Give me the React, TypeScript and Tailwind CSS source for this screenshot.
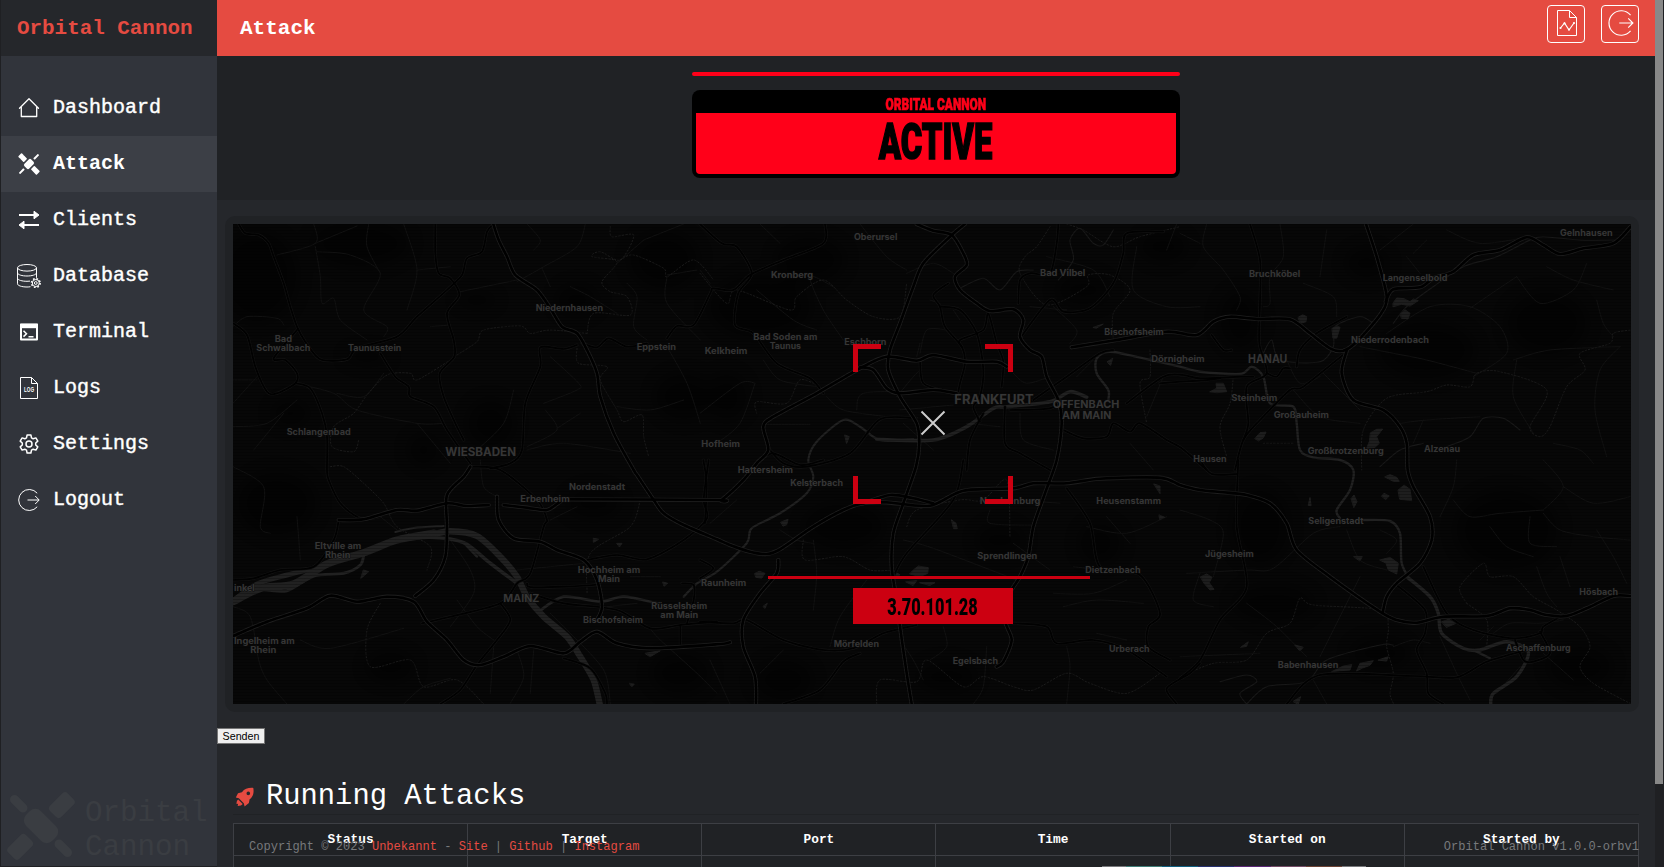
import type { ReactNode } from "react";

const MONO = "font-['Liberation_Mono','Courier_New',monospace]";
const COND = "font-['Roboto','Liberation_Sans',sans-serif]";

/* ---------- map geometry ---------- */

// Each sheet of the map has its own origin; coordinates inside are thirds of a pixel.
const SHEETS: Record<string, [number, number]> = {
  A: [-16, -14],
  B: [-16, 236],
  C: [467, -14],
  D: [467, 236],
  E: [947, -14],
  F: [947, 236],
};

function points(src: string): [number, number][] {
  let origin = SHEETS.A;
  const out: [number, number][] = [];
  for (const tok of src.trim().split(/\s+/)) {
    if (SHEETS[tok]) {
      origin = SHEETS[tok];
      continue;
    }
    const [x, y] = tok.split(",").map(Number);
    out.push([origin[0] + x / 3, origin[1] + y / 3]);
  }
  return out;
}

function curve(src: string): string {
  const p = points(src);
  let d = `M${p[0][0].toFixed(1)} ${p[0][1].toFixed(1)}`;
  for (let i = 0; i < p.length - 1; i++) {
    const a = p[Math.max(i - 1, 0)];
    const b = p[i];
    const c = p[i + 1];
    const e = p[Math.min(i + 2, p.length - 1)];
    const k = 7;
    d += `C${(b[0] + (c[0] - a[0]) / k).toFixed(1)} ${(b[1] + (c[1] - a[1]) / k).toFixed(1)} ${(c[0] - (e[0] - b[0]) / k).toFixed(1)} ${(c[1] - (e[1] - b[1]) / k).toFixed(1)} ${c[0].toFixed(1)} ${c[1].toFixed(1)}`;
  }
  return d;
}

function polygon(src: string): string {
  return points(src).map((q) => q.map((n) => n.toFixed(1)).join(",")).join(" ");
}

const MOTORWAYS = [
  "A 829,42 845,90 870,140 895,195 960,240 1000,295 1035,350 1080,370 1110,420 1140,490 1150,560 1190,670 1250,780 B 1260,45 1310,120 1340,160 1400,195 1500,238 D 90,255 150,275 200,282 240,268 340,200 430,150 490,130 560,127 690,137 790,92 940,85 1000,70 1100,70 1200,56 1380,53 1440,75 F 60,90 130,97 200,105 270,130 320,190 350,270 450,350 600,455 650,480 710,488 790,470 920,468 990,445 1050,450 1100,465 1160,468 1220,445 1300,408 1352,408",
  "C 795,42 750,80 670,160 640,230 600,340 570,420 565,480 600,560 650,640 658,700 648,770 D 610,130 580,220 575,320 590,420 600,500 620,640 635,732",
  "C 650,42 700,62 755,75 790,130 800,165 765,200 780,240 830,280 870,303 940,298 970,330 960,380 990,420 1025,440 1040,500 1075,570 1085,640 1070,750 D 1035,100 1000,200 985,290 960,350 930,400 915,480 935,540 910,605 890,620",
  "B 860,135 930,143 990,150 1030,125 1060,118 1500,120 D 65,120 130,60 170,10 C 205,720 190,650 220,620 350,550 480,475 560,440 650,452 700,435 800,455 890,455 920,470",
  "C 480,472 520,480 560,535 600,550 700,540 770,550",
  "C 1115,412 1250,390 1400,365 E 50,375 100,335 150,320 230,327 330,328 390,370 450,415 490,422 530,395 600,315 620,260 590,140 558,42",
  "E 617,275 640,238 720,232 760,205 820,185 880,135 960,120 1040,82 1090,105 1140,132 1210,115 1300,100 1352,50",
  "E 500,422 485,490 520,570 610,600 660,650 680,700 683,780 F 700,80 750,170 755,240 720,310 650,370 620,410 608,458",
  "B 48,528 150,485 270,445 340,407 420,425 510,410 590,425 630,485 690,540 740,600 790,615 860,590 940,558 1040,580 1090,545 1140,515 1200,550 1300,565 1500,553 D 90,547",
  "B 595,408 650,360 685,290 690,200 690,105 740,50 760,20",
  "B 365,180 440,178 540,150 600,152 690,130 750,138 815,135",
  "B 840,110 845,180 890,235 970,245 1020,270 1100,300 1140,360 1155,440 1140,480",
  "D 235,300 230,340 180,400 130,480 130,560 165,650 168,732",
  "D 490,130 570,105 640,115 700,130",
];

const ROADS = [
  "A 65,42 85,70 125,75 155,100 170,140 200,220 220,290 240,350 265,395 310,448 390,448 420,415 540,380 600,320 690,240 735,195 750,145 795,125 810,65 829,42",
  "A 655,42 655,130 665,190 700,205 727,255 690,310 710,390 712,440 668,490 680,560 715,640 740,690",
  "A 48,340 90,375 115,470 150,545 180,550 235,520 240,490 205,450 170,445 240,360",
  "A 235,520 280,535 315,610 330,680 330,780 B 335,60 370,130 430,175 490,170",
  "A 490,430 535,500 575,530 580,560 650,590 690,660 760,760",
  "A 1080,405 1040,417 970,412 970,470 925,580 915,720 880,760 820,775",
  "A 1095,400 1140,412 1175,385 1230,410 1290,400",
  "A 1350,385 1380,348 1430,345 1480,250 C 40,235 100,240 150,195 250,150 370,100 375,42",
  "C 0,42 65,100 110,110 155,190 115,250 105,345 160,370 230,460 330,505 370,550",
  "C 745,220 700,255 720,290 735,350 785,410 795,460 780,520 770,570",
  "C 720,290 780,300 830,370 850,480 840,560 820,590 840,635",
  "C 785,410 780,390 850,360 865,310 890,400 910,455 905,530",
  "C 955,280 960,210 990,190 1050,190 1070,100 1075,42",
  "C 960,385 1050,270 1090,305 1170,295 1240,220 1270,130 1280,70 1390,65",
  "C 1000,570 1100,500 1200,430 1240,420",
  "C 915,590 915,700 960,730 1060,785",
  "C 930,600 1050,595 1080,570",
  "C 1090,660 1150,685 1220,680 1240,640 1290,665 1320,640 1400,690 1445,715 E 80,780",
  "C 210,720 250,760 320,770 450,730 540,628 650,625",
  "C 1280,580 1390,500 1450,495 E 60,505 180,500 220,500",
  "C 1380,520 1440,515 E 60,512 120,505",
  "D 170,10 220,-20 300,15 370,0",
  "D 790,0 760,120 620,280 580,350",
  "D 0,485 100,490 140,480 250,540 370,570 460,565 550,520 650,495",
  "D 250,732 360,690 430,605 480,580",
  "D 940,490 1040,500 1070,550 1180,540 1280,570 1400,650",
  "D 1100,85 1170,190 1200,320 1320,345 1380,460 1345,500 1345,560 1410,600",
  "D 1500,610 1470,640 1400,685 1430,732",
  "F 175,0 170,200 200,380 120,480 60,600 0,655",
  "F 60,0 95,42 170,42",
  "F 320,732 420,645 700,648 830,652 920,605 1040,570",
  "F 650,375 735,450 735,520 710,570 740,640 745,700 790,732",
  "F 730,320 800,460 880,510 1000,535 1080,520 1090,500 1150,465",
  "F 1005,540 1030,600 1060,605 1110,580 1080,515",
  "E 350,470 360,420 410,370 500,320",
  "E 495,430 370,530 330,540 240,630 190,690 165,780",
  "E 210,42 240,150 240,280 238,400 260,490 200,530 205,640 190,690",
  "E 95,375 130,420 155,420",
  "E 260,490 290,500 310,475 330,475",
  "B 48,360 110,355 190,330 290,320 350,240 365,180",
  "B 615,490 700,470 850,430 900,370 940,340 980,200 990,180 960,120 850,30 760,20",
  "B 850,430 880,480 840,540 780,615 730,690 670,732",
  "B 1110,300 1200,285 1290,298 1400,240 1470,175 1460,120 1475,0",
  "B 930,370 950,382 1130,375 1150,360",
  "B 940,400 1040,430 1200,450 1300,505 1390,495 1500,485",
  "B 1040,595 1120,625 1165,700 1170,732",
  "B 1390,495 1390,560",
  "B 1395,370 1430,375 1430,420 1410,490",
  "C 800,780 810,690 850,610",
  "C 660,450 670,520 740,545",
  "D 0,300 40,325 0,355",
  "D 10,0 20,70 15,190",
];

const MINOR = [
  "A 290,42 295,100 180,135", "A 295,100 420,48", "A 300,125 400,135 490,190 440,300 510,350 500,380",
  "A 295,110 310,200 315,280 350,265 370,330 450,390", "A 455,42 450,110 490,190", "A 560,42 600,180 570,300",
  "A 600,180 700,170", "A 730,245 900,210", "A 48,350 90,320 180,325 200,345", "A 48,510 120,510",
  "A 48,580 120,500", "A 235,520 350,550 420,600 600,640 680,640", "A 240,570 150,640 48,650", "A 110,720 200,610",
  "A 930,42 970,90 950,120", "A 1105,42 1080,110 980,170 900,215", "A 975,175 1000,230", "A 1280,90 1400,42",
  "A 1280,90 1200,160", "A 1350,195 1440,180", "A 1230,220 1260,260 1250,350 1290,390", "A 1350,200 1350,280 1450,390",
  "A 1060,230 1120,260 1200,310", "A 980,580 1080,540 1085,520 1000,440", "A 985,600 1020,660 930,710", "A 1020,655 1090,610",
  "A 1350,410 1410,520 1450,640", "A 1200,590 1300,600 1400,570", "A 930,720 1040,700 1240,730", "A 640,350 700,345",
  "A 500,490 440,560 360,550", "A 600,640 700,760", "A 890,540 860,640 780,720",
  "B 48,20 140,80 130,200 160,220", "B 240,170 250,300", "B 210,732 150,660 125,600 100,470 48,440",
  "B 250,540 340,565 560,505", "B 490,170 540,210", "B 700,240 760,330 770,400 700,500", "B 720,420 780,500 830,540",
  "B 830,560 820,700", "B 900,570 920,650 880,730", "B 950,570 940,700", "B 1000,460 1060,520 1160,630 1180,732",
  "B 1220,470 1290,500 1330,540 1440,640 1500,700", "B 1170,440 1260,430", "B 900,330 1000,320 1100,310", "B 1000,180 1080,140",
  "B 560,732 620,680 700,655", "B 790,0 800,80 840,110", "B 1240,350 1330,350",
  "C 180,42 240,100", "C 480,42 560,140 620,180", "C 0,180 30,220", "C 620,190 700,160 760,190", "C 400,230 330,200 370,300 430,390",
  "C 170,240 280,330 350,360", "C 190,450 240,510 350,530", "C 0,610 120,520 165,520", "C 165,520 120,640 50,700",
  "C 200,643 330,643", "C 660,430 680,360 740,360", "C 690,270 720,280", "C 660,400 650,440", "C 380,560 430,600 560,620",
  "C 590,560 640,500 660,480", "C 600,600 760,585", "C 610,640 700,720", "C 470,600 490,550 640,545", "C 760,300 780,330",
  "C 990,290 1100,300", "C 1040,140 1180,180 1230,260", "C 1310,110 1300,240 1400,290 1500,290", "C 1400,120 1430,42",
  "C 1110,400 1130,360 1060,290", "C 1180,450 1130,500", "C 940,490 980,520 1050,500", "C 960,610 970,690 1060,720",
  "C 800,640 900,650", "C 1120,600 1200,600", "C 1290,700 1360,780", "C 1390,500 1340,620",
  "D 870,150 870,190 1000,195", "D 940,250 1050,330", "D 610,240 700,265 950,360", "D 500,360 420,470 390,560",
  "D 240,210 290,240 340,250", "D 340,240 350,340 340,450", "D 860,560 850,680 820,732", "D 670,660 640,600 600,540",
  "D 1100,560 1110,620 1100,732", "D 1190,520 1280,540", "D 1060,400 1180,400 1280,360", "D 1200,330 1120,320",
  "D 1090,440 1190,420 1330,430", "D 30,600 90,732", "D 250,570 180,640", "D 1220,170 1290,250", "D 30,190 110,120",
  "D 1160,200 1280,220 1400,170", "D 730,500 740,560 690,600", "D 960,120 1080,130",
  "E 80,42 70,110 130,180 180,260 170,300", "E 0,70 60,100", "E 300,42 310,140 270,200 270,280 250,290", "E 370,220 460,260 470,320",
  "E 440,60 420,200", "E 600,120 700,42", "E 680,140 720,190", "E 740,90 700,130", "E 800,60 900,100 1040,82",
  "E 620,370 750,290 870,290 960,350 980,430 880,500", "E 540,410 640,430 740,450 890,490", "E 1010,200 1080,280 1180,240 1220,160",
  "E 1100,170 1180,210 1300,240", "E 870,295 950,240 1010,200", "E 1000,450 1110,420 1320,410", "E 1250,270 1270,340 1300,380",
  "E 660,640 740,630 900,620", "E 730,630 700,700", "E 1010,450 1000,560 1060,670", "E 1320,410 1260,480 1245,600 1280,740",
  "E 340,540 420,620 540,640", "E 430,490 540,600", "E 1120,700 1200,720 1240,760", "E 320,450 360,520 420,500",
  "F 0,150 90,180 130,220 100,350", "F 20,340 200,330 280,325 400,220 480,200", "F 200,430 290,500 380,590", "F 540,350 420,590",
  "F 500,210 540,300 620,330", "F 600,210 650,240 620,280", "F 830,0 820,80 780,170", "F 820,120 870,170 960,160 1090,150",
  "F 1090,150 1150,80 1090,0", "F 1150,80 1240,130 1350,110", "F 1090,160 1140,210 1240,230 1350,240", "F 1050,170 1050,250 1130,260",
  "F 930,200 980,260 1060,290", "F 1250,210 1300,290 1340,370", "F 1140,290 1170,380", "F 1070,320 1100,400 1130,440",
  "F 780,530 830,640 870,720", "F 940,520 990,490 1080,490 1150,480", "F 900,540 940,500", "F 1090,580 1180,660",
  "F 1020,620 950,700", "F 640,560 700,540 750,550", "F 100,440 40,420 60,340", "F 240,580 0,590", "F 400,660 440,732",
];

const BORDERS = [
  "A 1180,50 1185,80 1250,75 1210,150 1150,125 1125,140 1200,155 1155,215 1180,245 1230,260 1240,315 1130,310 1110,370",
  "A 1210,150 1250,135 1340,175 1350,200 1430,150 1490,210",
  "A 1110,370 1000,360 940,370 910,348 800,360 780,395 720,435",
  "A 700,450 600,510 580,490 510,495 450,555 410,610 350,650 345,710 410,725 425,690",
  "A 1080,415 1085,460 1170,470 1150,510 1200,600 1220,635 1275,615 1280,680 1295,740",
  "B 340,20 380,20 440,70 500,130 540,200 640,260 630,330",
  "B 490,430 450,510 460,620 580,600 620,680 720,660 800,732",
  "B 1270,120 1240,200 1120,280 1110,400",
  "C 0,190 80,280 110,240 270,300 290,260 370,210 440,270 520,320 600,320 620,220",
  "C 360,530 300,510 260,580 170,575 170,610",
  "C 1050,50 1010,110 975,140 960,190 1040,285 1160,230 1165,195 1230,195 1290,240 1240,310 1240,390",
  "C 1100,42 1150,60 1240,110 1320,80 1440,50",
  "C 1350,420 1350,500 1320,520 1340,640",
  "D 310,240 315,300 430,290 510,330 580,330",
  "D 530,732 540,660 650,665 680,600 790,680 850,650 940,680 1000,690 1100,640 1170,670 1280,700 1380,640",
  "D 620,200 650,150 780,120 850,120 920,60 930,230",
  "E 1350,360 1300,370 1290,400 1200,430 1215,480 1160,530 1110,650 1080,680 1050,650 1100,540 960,485 890,490 870,530 800,525 740,545 620,565 550,660 545,780",
  "E 160,500 150,580 120,650 140,740",
  "E 250,700 340,700",
  "F 0,650 100,610 200,600 260,520 330,490 360,415 400,435 600,450 625,500 620,560 640,640 630,700 640,730",
  "F 860,430 840,380 910,310 930,350 1000,350 1060,410 1130,450 1200,500 1230,560 1200,620 1240,670 1350,730",
  "F 860,430 920,480 920,560",
];

const STREAMS = [
  "C 1075,210 1120,150 1110,90 1140,55 1180,100 1210,105 1240,60",
  "C 780,235 850,205 900,240 950,185 1000,180",
  "E 250,430 275,390 300,450 420,455 460,410 465,350 540,320 580,340",
  "E 640,340 680,290 760,230 850,170 950,140 1050,90 1090,80 1200,90 1310,90",
  "F 200,732 260,680 380,665 440,600 600,555 640,555",
  "F 120,665 200,645 230,665 180,700 200,732",
  "E 800,710 870,680 910,625 970,625 1020,660",
  "E 600,770 660,720 730,700",
];

const RIVERS: { d: string; w: number }[] = [
  { d: "B 48,425 130,385 230,372 330,312 440,278 540,240 650,220", w: 7.5 },
  { d: "B 48,422 120,372 210,345 330,315", w: 5 },
  { d: "B 640,225 700,214 780,228 850,290 900,350 930,410 980,470 1050,530 1090,590 1130,660 1148,732", w: 6.4 },
  { d: "B 130,388 210,392 290,348 380,340 430,315 440,285", w: 3 },
  { d: "B 540,240 640,232 740,248 820,310 900,370", w: 3.6 },
  { d: "B 740,248 780,290", w: 2.4 },
  { d: "B 535,216 590,204 680,198", w: 2 },
  { d: "B 965,455 1040,410 1150,425 1220,410 1320,430", w: 2.8 },
  { d: "B 1400,410 1440,370 1500,335 D 140,250 155,205 240,160 320,100 340,50 325,0 C 350,695 430,630 480,650 540,690 640,688", w: 2.2 },
  { d: "C 530,688 700,690 800,650 880,595 920,590 1050,575 1110,545 1160,562", w: 3.6 },
  { d: "C 1225,570 1225,540 1190,490 1190,445 1230,425 1330,445 1440,470 E 60,485 180,492 215,470 250,500 270,580 340,590 350,640 360,720 400,742 480,750 520,780 F 510,90 470,150 480,175", w: 2.4 },
  { d: "F 550,180 630,183 660,220 665,310 690,360", w: 2.4 },
  { d: "F 680,350 750,410 775,460 785,520 850,565 900,570 980,545 1045,575 1010,650 940,700 932,732", w: 3.4 },
  { d: "F 880,570 930,595", w: 2.4 },
];

const LAKES = [
  "E 640,278 650,264 672,266 690,275 700,267 715,272 690,288 665,283 640,290", "E 662,312 676,300 690,310 684,326 665,325", "E 355,322 368,314 380,320 378,335 362,340", "E 457,355 472,348 480,352 470,385 460,385",
  "E 225,685 240,668 258,666 250,684 236,692", "E 572,668 590,658 608,657 590,680 598,700 585,712 560,715 568,695", "E 90,545 110,535 108,520 130,520 140,545 112,548", "F 62,350 80,342 96,352 88,368 102,388 90,390 72,370",
  "F 655,90 672,75 690,88 695,122 660,118", "F 615,50 630,44 650,52 658,64 640,64 628,58", "F 605,108 612,100 628,108 618,118", "F 514,115 522,105 531,125 522,142", "F 600,300 630,292 655,310 650,342 625,330 618,310",
  "F 522,290 547,290 540,302", "F 785,485 806,478 828,490 800,502", "F 455,635 490,618 515,614 510,630 480,632", "F 530,632 540,610 580,602 570,616 548,624",
  "F 595,600 625,590 620,602", "F 345,555 370,562 360,572", "F 182,562 205,545 200,558", "F 385,135 390,112 393,136", "F 340,724 362,710 355,732",
  "D 640,330 655,318 685,323 683,340 660,350 630,342", "D 618,365 650,362 640,376", "D 660,368 705,368 690,376", "D 165,340 178,334 195,340 185,355 168,352",
  "D 243,186 264,178 260,194 250,198", "D 755,180 768,190 772,206 762,206", "D 190,438 202,430 195,445", "C 1222,455 1238,445 1232,466", "C 435,675 448,680 440,700",
  "C 1180,352 1210,342 1190,354", "B 1130,235 1145,238 1130,247", "B 1200,250 1215,250 1208,260", "B 1338,366 1352,370 1342,378", "B 1238,670 1252,672 1245,680",
  "B 1285,580 1330,572 1300,590", "B 440,330 455,335 432,355", "D 578,330 600,345 580,350", "D 1362,72 1380,78 1380,100", "D 1378,165 1394,172 1380,178",
];

type Label = [string, number, number, number, string, number?];
const LABELS: Label[] = [
  ["A", 199, 396, 52, "Bad"], ["A", 199, 423, 162, "Schwalbach"], ["A", 473, 422, 160, "Taunusstein"],
  ["A", 1057, 302, 202, "Niedernhausen"], ["A", 1318, 419, 118, "Eppstein"], ["A", 305, 674, 192, "Schlangenbad"],
  ["A", 791, 738, 212, "WIESBADEN", 34],
  ["B", 1140, 89, 168, "Nordenstadt"], ["B", 984, 127, 148, "Erbenheim"], ["B", 363, 267, 140, "Eltville am"], ["B", 362, 295, 76, "Rhein"],
  ["B", 1176, 338, 188, "Hochheim am"], ["B", 1176, 366, 66, "Main"], ["B", 913, 425, 108, "MAINZ", 32], ["B", 1188, 488, 180, "Bischofsheim"],
  ["B", 1387, 446, 168, "Rüsselsheim"], ["B", 1387, 474, 114, "am Main"], ["B", 142, 553, 182, "Ingelheim am"], ["B", 139, 580, 78, "Rhein"],
  ["B", 82, 393, 62, "inkel"],
  ["C", 527, 89, 130, "Oberursel"], ["C", 276, 204, 126, "Kronberg"], ["C", 256, 390, 192, "Bad Soden am"], ["C", 256, 417, 94, "Taunus"],
  ["C", 78, 432, 128, "Kelkheim"], ["C", 496, 405, 126, "Eschborn"], ["C", 1088, 199, 136, "Bad Vilbel"], ["C", 1302, 374, 178, "Bischofsheim"],
  ["C", 1434, 456, 160, "Dörnigheim"], ["C", 882, 583, 238, "FRANKFURT", 38], ["C", 1158, 594, 200, "OFFENBACH", 32], ["C", 1160, 627, 148, "AM MAIN", 32],
  ["C", 62, 710, 116, "Hofheim"],
  ["D", 196, 38, 166, "Hattersheim"], ["D", 350, 77, 158, "Kelsterbach"], ["D", 930, 132, 182, "Neu Isenburg"], ["D", 1286, 133, 194, "Heusenstamm"],
  ["D", 922, 297, 180, "Sprendlingen"], ["D", 1239, 338, 166, "Dietzenbach"], ["D", 71, 379, 136, "Raunheim"], ["D", 469, 562, 136, "Mörfelden"],
  ["D", 826, 612, 136, "Egelsbach"], ["D", 1288, 576, 122, "Urberach"],
  ["E", 1219, 77, 158, "Gelnhausen"], ["E", 284, 201, 154, "Bruchköbel"], ["E", 705, 212, 194, "Langenselbold"], ["E", 630, 400, 234, "Niederrodenbach"],
  ["E", 263, 460, 118, "HANAU", 34], ["E", 223, 574, 138, "Steinheim"], ["E", 364, 624, 166, "Großauheim"], ["E", 497, 732, 228, "Großkrotzenburg"],
  ["E", 786, 727, 108, "Alzenau"], ["E", 90, 757, 100, "Hausen"],
  ["F", 468, 192, 166, "Seligenstadt"], ["F", 148, 292, 146, "Jügesheim"], ["F", 1256, 405, 116, "Hösbach"], ["F", 1075, 574, 194, "Aschaffenburg"],
  ["F", 384, 624, 182, "Babenhausen"],
];

const WOODS: [string, number, number, number, number][] = [
  ["A", 120, 200, 150, 170], ["A", 430, 100, 180, 90], ["A", 780, 270, 70, 30], ["A", 220, 610, 70, 50], ["A", 450, 440, 80, 30],
  ["A", 820, 640, 90, 90], ["A", 1340, 150, 130, 110], ["A", 1400, 560, 110, 90], ["A", 620, 720, 60, 60], ["A", 1080, 270, 80, 60],
  ["B", 180, 130, 150, 120], ["B", 1130, 130, 100, 60], ["B", 1390, 640, 110, 80], ["B", 520, 620, 90, 60],
  ["C", 180, 290, 190, 120], ["C", 330, 150, 130, 90], ["C", 1150, 240, 100, 60], ["C", 1390, 110, 90, 60], ["C", 80, 560, 80, 90],
  ["D", 430, 200, 150, 90], ["D", 900, 240, 90, 60], ["D", 740, 650, 110, 60], ["D", 250, 660, 110, 80], ["D", 1200, 250, 80, 80],
  ["E", 740, 420, 180, 110], ["E", 1100, 340, 150, 120], ["E", 180, 330, 80, 110], ["E", 560, 160, 80, 60],
  ["F", 980, 210, 190, 150], ["F", 240, 200, 110, 140], ["F", 280, 430, 150, 70], ["F", 600, 580, 110, 60], ["F", 1200, 620, 120, 80],
];

function AreaMap() {
  return (
    <svg className="block h-[480px] w-[1398px] bg-[#070707]" viewBox="0 0 1398 480" fill="none" strokeLinecap="round" strokeLinejoin="round">
      <defs>
        <pattern id="scan" width="8" height="3" patternUnits="userSpaceOnUse">
          <rect width="8" height="1" fill="#000" opacity="0.25" />
        </pattern>
        <filter id="soft" x="-30%" y="-30%" width="160%" height="160%">
          <feGaussianBlur stdDeviation="7" />
        </filter>
      </defs>
      <g fill="#030303" opacity="0.45" filter="url(#soft)">
        {WOODS.map(([s, x, y, rx, ry], i) => (
          <ellipse key={i} cx={SHEETS[s][0] + x / 3} cy={SHEETS[s][1] + y / 3} rx={rx / 3.6} ry={ry / 3.6} />
        ))}
      </g>
      <g stroke="#121212" strokeWidth="1">
        {MINOR.map((r) => <path key={r} d={curve(r)} />)}
      </g>
      <g stroke="#1e1e1e" strokeWidth="0.9" strokeDasharray="1.5 2">
        {BORDERS.map((r) => <path key={r} d={curve(r)} />)}
      </g>
      <g stroke="#191919" strokeWidth="1.1">
        {STREAMS.map((r) => <path key={r} d={curve(r)} />)}
      </g>
      <g stroke="#212121">
        {RIVERS.map((r) => <path key={r.d} d={curve(r.d)} strokeWidth={r.w} />)}
      </g>
      <g fill="#1e1e1e" stroke="#1e1e1e" strokeWidth="1">
        {LAKES.map((r) => <polygon key={r} points={polygon(r)} />)}
      </g>
      <g stroke="#131313" strokeWidth="3">
        {ROADS.map((r) => <path key={r} d={curve(r)} />)}
      </g>
      <g stroke="#010101" strokeWidth="1.7">
        {ROADS.map((r) => <path key={r} d={curve(r)} />)}
      </g>
      <g stroke="#1f1f1f" strokeWidth="4.2">
        {MOTORWAYS.map((r) => <path key={r} d={curve(r)} />)}
      </g>
      <g stroke="#000" strokeWidth="2.6">
        {MOTORWAYS.map((r) => <path key={r} d={curve(r)} />)}
      </g>
      <rect width="1398" height="480" fill="url(#scan)" />
      <g className="font-['Inter','Open_Sans',sans-serif] font-bold" fill="#363636" stroke="#0a0a0a" strokeWidth="0.8" paintOrder="stroke" textAnchor="middle">
        {LABELS.map(([s, x, y, w, text, size]) => (
          <text
            key={text + s + y}
            x={SHEETS[s][0] + x / 3}
            y={SHEETS[s][1] + y / 3}
            fontSize={(size ?? 26) / 3}
            textLength={w / 3}
            lengthAdjust="spacingAndGlyphs"
          >
            {text}
          </text>
        ))}
      </g>
    </svg>
  );
}

/* ---------- icons ---------- */

function Svg({ className, children }: { className: string; children: ReactNode }) {
  return (
    <svg className={className} viewBox="0 0 24 24" fill="none" stroke="currentColor" strokeWidth="1">
      {children}
    </svg>
  );
}

const HomeIcon = () => (
  <Svg className="size-6">
    <path d="M2.500 12.200 12 2.800l9.500 9.400M4.300 10.500V20.500h15.400V10.500" strokeWidth="1.300" strokeLinejoin="round" strokeLinecap="round" />
  </Svg>
);

const SatelliteIcon = () => (
  <Svg className="size-6">
    <g fill="currentColor" stroke="none" transform="rotate(45 12 12)">
      <rect x="-1" y="9.500" width="3.600" height="5" rx="0.800" />
      <rect x="2" y="9.500" width="5" height="5" rx="0.800" />
      <rect x="17" y="9.500" width="8" height="5" rx="0.800" />
      <rect x="8.600" y="7.200" width="6.800" height="9.600" rx="1.800" />
      <rect x="11" y="-1.500" width="2" height="6.600" rx="0.600" />
      <rect x="11" y="18.900" width="2" height="6.600" rx="0.600" />
    </g>
  </Svg>
);

const SwapIcon = () => (
  <Svg className="size-6">
    <path d="M2 7h16M22 17H6" strokeWidth="2" />
    <path d="M17 3.200 22 7l-5 3.800zM7 13.200 2 17l5 3.800z" fill="currentColor" />
  </Svg>
);

const DatabaseIcon = () => (
  <Svg className="size-6 overflow-visible">
    <ellipse cx="10" cy="3.800" rx="9.500" ry="3.300" />
    <path d="M.500 3.800v16c0 1.700 4 3.200 9.500 3.200 1.300 0 2.500-.100 3.500-.300M19.500 3.800v10M.500 9c.500 1.800 4.500 3 9.500 3s9-1.200 9.500-3M.500 14.300c.500 1.800 4.500 3 9.500 3 1 0 2-.100 3-.200" />
    <circle cx="18.800" cy="19" r="4.300" strokeWidth="1.600" strokeDasharray="1.700 1.680" />
    <circle cx="18.800" cy="19" r="3.500" />
    <circle cx="18.800" cy="19" r="1.400" />
  </Svg>
);

const TerminalIcon = () => (
  <Svg className="size-6">
    <path d="M4 4.500h16v15H4z" strokeWidth="2" strokeLinejoin="round" />
    <path d="M3 3.800h18v4.400H3z" fill="currentColor" stroke="none" />
    <path d="m6.500 10.800 3 2.900-3 2.900M11.500 16.800h5" strokeWidth="1.500" />
  </Svg>
);

const LogIcon = () => (
  <Svg className="size-6 overflow-visible">
    <path d="M3.500 1.500h11l6 6v15h-17zM14.500 1.500v6h6" />
    <text x="12" y="16.300" fontSize="7.500" textAnchor="middle" textLength="10" lengthAdjust="spacingAndGlyphs" fill="currentColor" stroke="none" className="font-['Liberation_Sans',sans-serif] font-bold">
      LOG
    </text>
  </Svg>
);

const GearIcon = () => (
  <Svg className="size-6">
    <path
      d="M10.100 3h3.800l.600 2.800 1.700 1 2.700-.900 1.900 3.200-2.100 1.900v2l2.100 1.900-1.900 3.200-2.700-.900-1.700 1-.600 2.800h-3.800l-.600-2.800-1.700-1-2.700.900-1.900-3.200L5.300 13v-2L3.200 9.100l1.900-3.200 2.700.900 1.700-1z"
      strokeWidth="1.500"
      strokeLinejoin="round"
    />
    <circle cx="12" cy="12" r="3" strokeWidth="1.500" />
  </Svg>
);

const LogoutIcon = ({ className = "size-6" }: { className?: string }) => (
  <Svg className={`${className} overflow-visible`}>
    <path d="M20.200 5.200A10.500 10.500 0 1 0 20.200 18.800" />
    <path d="M10.500 12H22M18.200 8l4 4-4 4" />
  </Svg>
);

const ReportIcon = () => (
  <svg className="h-[28px] w-[22px]" viewBox="0 0 22 28" fill="none" stroke="currentColor">
    <path d="M1.500 1.500h12l7 7v18h-19zM13.500 1.500v7h7" />
    <path d="m4.500 19 4-5 4.500 7 5-7" strokeWidth="1.200" />
    <g fill="currentColor" stroke="none">
      <circle cx="4.500" cy="19" r="1.100" />
      <circle cx="8.500" cy="14.300" r="1.100" />
      <circle cx="13" cy="20.500" r="1.100" />
      <circle cx="18" cy="14" r="1.100" />
    </g>
  </svg>
);

const RocketIcon = () => (
  <svg className="ml-[2px] size-5" viewBox="0 0 20 20" fill="#e54b41">
    <path
      fillRule="evenodd"
      d="M18.300.900C13.300.600 9.600 1.700 6.900 5.200L3 6.200.800 10.600l3 .600 5 5 .800 3.200 4.300-3.400.700-3.700C17.900 9.800 19.200 6 18.300.900zM13.300 4.600a1.800 1.800 0 1 1 0 3.600 1.800 1.800 0 0 1 0-3.600z"
    />
    <path d="M3.200 12.400c-1.300.900-1.600 2.400-1.700 4.600l1.600-.300-.400 2.200c2.600-.100 4.200-.400 5-1.800z" />
  </svg>
);

/* ---------- page ---------- */

const NAV: { label: string; icon: ReactNode; active?: boolean }[] = [
  { label: "Dashboard", icon: <HomeIcon /> },
  { label: "Attack", icon: <SatelliteIcon />, active: true },
  { label: "Clients", icon: <SwapIcon /> },
  { label: "Database", icon: <DatabaseIcon /> },
  { label: "Terminal", icon: <TerminalIcon /> },
  { label: "Logs", icon: <LogIcon /> },
  { label: "Settings", icon: <GearIcon /> },
  { label: "Logout", icon: <LogoutIcon /> },
];

function Sidebar() {
  return (
    <aside className="flex h-[866px] w-[216px] shrink-0 flex-col bg-[#31343b]">
      <div className="flex h-14 items-center bg-[#25272b] pt-[2px] pl-4 text-[20.900px] font-bold text-[#e54b41]">Orbital Cannon</div>
      <nav className="mt-6 flex flex-col text-xl text-white">
        {NAV.map((n) => (
          <a key={n.label} className={n.active ? "flex h-14 items-center bg-[#3c3f46] pl-4 font-bold" : "flex h-14 items-center pl-4 [-webkit-text-stroke:0.4px_white]"}>
            <span className="flex w-6 justify-center">{n.icon}</span>
            <span className="ml-3 leading-6">{n.label}</span>
          </a>
        ))}
      </nav>
      <div className="mt-auto flex items-end pb-[6px] pl-[6px] text-[#3a3d42]">
        <svg className="h-[68px] w-[68px]" viewBox="0 0 68 68" fill="currentColor">
          <g transform="rotate(45 34 34)">
            <rect x="15.500" y="23.500" width="37" height="21" rx="8" />
            <rect x="-8" y="29.500" width="21" height="9" rx="4.500" />
            <rect x="55" y="29.500" width="21" height="9" rx="4.500" />
            <rect x="26" y="-8" width="16" height="25" rx="4" />
            <rect x="26" y="51" width="16" height="25" rx="4" />
          </g>
        </svg>
        <div className="mb-[-5px] ml-[10px] text-[29.200px] leading-[34px]">
          Orbital
          <br />
          Cannon
        </div>
      </div>
    </aside>
  );
}

function Target() {
  return (
    <>
      <div className="absolute top-[120px] left-[620px] flex size-40 items-center justify-center">
        <span className="absolute top-0 left-0 size-7 border-t-[5px] border-l-[5px] border-[#cc0011]" />
        <span className="absolute top-0 right-0 size-7 border-t-[5px] border-r-[5px] border-[#cc0011]" />
        <span className="absolute bottom-0 left-0 size-7 border-b-[5px] border-l-[5px] border-[#cc0011]" />
        <span className="absolute right-0 bottom-0 size-7 border-r-[5px] border-b-[5px] border-[#cc0011]" />
        <svg className="mt-[-3px] size-[26px]" viewBox="0 0 26 26" stroke="#ccc" strokeWidth="2">
          <path d="M1.500 1.500l23 23M24.500 1.500l-23 23" />
        </svg>
      </div>
      <div className="absolute top-[352px] left-[535px] h-[3px] w-[322px] bg-[#cc0011]" />
      <div className={`absolute top-[364px] left-[620px] flex h-9 w-40 items-center justify-center bg-[#cc0011] pt-[2px] text-2xl font-black text-black ${COND}`}>
        <span className="scale-x-[0.680]">3.70.101.28</span>
      </div>
    </>
  );
}

const STRIPES = [
  "w-6 bg-[#77787b]", "w-9 bg-[#3f7d77]", "w-9 bg-[#0f5f80]", "w-9 bg-[#26306f]",
  "w-[37px] bg-[#5a2675]", "w-[35px] bg-[#744c66]", "w-9 bg-[#6b4234]", "w-6 bg-[#77787b]",
];

export default function App() {
  return (
    <div className={`relative flex h-[867px] w-[1664px] overflow-hidden bg-[#1f2023] pl-px ${MONO}`}>
      <Sidebar />
      <main className="flex h-[867px] w-[1438px] shrink-0 flex-col bg-[#25272b]">
        <header className="flex h-14 shrink-0 items-start justify-between bg-[#e54b41] pr-4 pl-[23px] text-white">
          <h1 className="text-[21px] leading-[58px] font-bold">Attack</h1>
          <div className="flex gap-4 pt-[5px]">
            <button className="flex size-[38px] items-center justify-center rounded border border-white pr-px pb-[2px] pl-[2px]">
              <ReportIcon />
            </button>
            <button className="flex size-[38px] items-center justify-center rounded border border-white pb-[2px] pl-[2px]">
              <LogoutIcon className="size-7" />
            </button>
          </div>
        </header>

        <section className="flex h-36 shrink-0 flex-col items-center bg-[#202225] pt-4">
          <div className="h-1 w-[488px] rounded-sm bg-[#ff0019]" />
          <div className={`mt-[14px] flex h-[88px] w-[488px] flex-col rounded-lg bg-black px-1 pb-1 font-black ${COND}`}>
            <div className="flex h-[23px] items-center justify-center pt-[5px] text-[17px] leading-[17px] text-[#ff0019]">
              <span className="scale-x-[0.700] whitespace-nowrap [-webkit-text-stroke:0.7px_#ff0019]">ORBITAL CANNON</span>
            </div>
            <div className="flex h-[61px] items-center justify-center rounded-b bg-[#ff0019] pb-[3px] text-[50.500px] leading-[50px] text-black">
              <span className="scale-x-[0.650] [-webkit-text-stroke:1.600px_black]">ACTIVE</span>
            </div>
          </div>
        </section>

        <section className="relative mt-4 ml-2 h-[496px] w-[1414px] shrink-0 rounded-[10px] bg-[#202225] p-2">
          <div className="relative h-[480px] w-[1398px] overflow-hidden">
            <AreaMap />
            <Target />
          </div>
        </section>

        <div className="mt-4 flex">
          <button className="flex h-4 w-12 items-center justify-center border border-[#767676] bg-[#efefef] font-['Liberation_Sans',sans-serif] text-[10.700px] leading-none text-black">
            Senden
          </button>
        </div>

        <section className="mt-9 ml-4 w-[1406px]">
          <h2 className="flex h-[35px] items-center border-b border-[#202225] text-[28.8px] text-white">
            <RocketIcon />
            <span className="ml-[11px]">Running Attacks</span>
          </h2>
          <table className="mt-2 w-full table-fixed border-collapse bg-[#202225] text-[12.800px] text-white">
            <thead>
              <tr className="h-8">
                {["Status", "Target", "Port", "Time", "Started on", "Started by"].map((h) => (
                  <th key={h} className="border border-[#3d3f44] p-0 font-bold">
                    {h}
                  </th>
                ))}
              </tr>
            </thead>
            <tbody>
              <tr className="h-8">
                {[0, 1, 2, 3, 4, 5].map((c) => (
                  <td key={c} className="border border-[#3d3f44]" />
                ))}
              </tr>
            </tbody>
          </table>
        </section>
      </main>
      <div className="h-[784px] w-2 bg-[#888]" />

      <footer className="absolute bottom-[11px] left-[249px] flex w-[1390px] justify-between text-[12.050px] leading-[18px] text-[#77797c]">
        <span>
          Copyright © 2023 <span className="text-[#e54b41]">Unbekannt</span> - <span className="text-[#e54b41]">Site</span> |{" "}
          <span className="text-[#e54b41]">Github</span> | <span className="text-[#e54b41]">Instagram</span>
        </span>
        <span>Orbital Cannon v1.0.0-orbv1</span>
      </footer>
      <div className="absolute bottom-0 left-[1102px] flex h-px">
        {STRIPES.map((s, i) => (
          <span key={i} className={s} />
        ))}
      </div>
    </div>
  );
}
